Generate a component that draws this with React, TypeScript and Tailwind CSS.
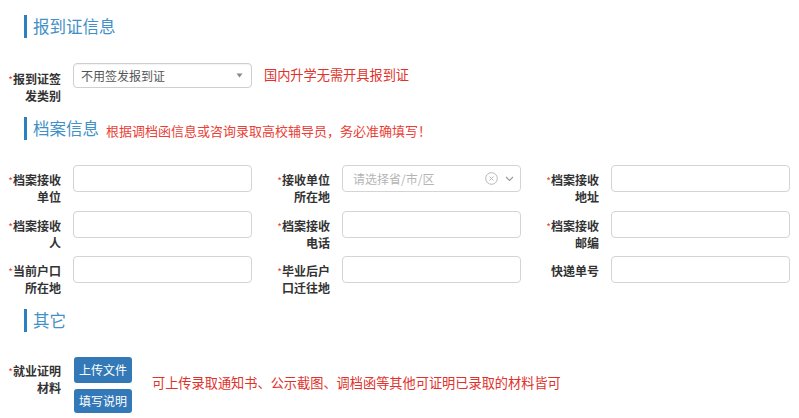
import React from "react";

const Star = () => <span className="text-[#e0453f] text-[10px] font-normal align-top relative top-[1px]">*</span>;

function Label({ lines, req = true, pt = "pt-[6px]" }: { lines: string[]; req?: boolean; pt?: string }) {
  return (
    <div className={`w-[61px] shrink-0 text-right text-[12px] leading-[17px] font-bold text-[#333] ${pt}`}>
      {lines.map((l, i) => (
        <div key={i} className="whitespace-nowrap">
          {i === 0 && req ? <Star /> : null}
          {l}
        </div>
      ))}
    </div>
  );
}

function Heading({ title, children }: { title: string; children?: React.ReactNode }) {
  return (
    <div className="flex items-center pl-[24px]">
      <div className="w-[3px] h-[23px] bg-[#2b80c0]" />
      <div className="ml-[6px] flex items-baseline">
        <span className="text-[16.5px] leading-[23px] text-[#4190c8]">{title}</span>
        {children}
      </div>
    </div>
  );
}

function TextInput() {
  return <div className="w-[179px] h-[27px] shrink-0 border border-[#d4d4d4] rounded-[4px] bg-white" />;
}

function Cell({ lines, req = true, children }: { lines: string[]; req?: boolean; children: React.ReactNode }) {
  return (
    <div className="flex items-start">
      <Label lines={lines} req={req} />
      <div className="ml-[12px]">{children}</div>
    </div>
  );
}

export default function App() {
  return (
    <div className="w-[799px] h-[418px] overflow-hidden bg-white font-['Noto_Sans_CJK_SC','Microsoft_YaHei',sans-serif] pt-[15px]">
      <Heading title="报到证信息" />

      <div className="flex items-start mt-[25px]">
        <Label lines={["报到证签", "发类别"]} pt="pt-[7px]" />
        <div className="ml-[12px] w-[179px] h-[25px] border border-[#cfcfcf] rounded-[4px] flex items-center justify-between pl-[7px] pr-[8px] shadow-[inset_0_1px_1px_rgba(0,0,0,0.05)]">
          <span className="text-[12px] leading-[16px] text-[#555]">不用签发报到证</span>
          <svg width="7" height="5" viewBox="0 0 7 5"><path d="M0.5 0.5 L6.5 0.5 L3.5 4.5 Z" fill="#888" /></svg>
        </div>
        <div className="ml-[12px] mt-[3px] text-[13.2px] leading-[18px] text-[#e0322c]">国内升学无需开具报到证</div>
      </div>

      <div className="mt-[13px]">
        <Heading title="档案信息">
          <span className="ml-[7px] text-[13px] leading-[18px] text-[#ea3e36] relative top-[1px]">根据调档函信息或咨询录取高校辅导员，务必准确填写！</span>
        </Heading>
      </div>

      <div className="mt-[25px] grid grid-cols-[269px_269px_261px] auto-rows-[41px] gap-y-[4.5px]">
        <Cell lines={["档案接收", "单位"]}><TextInput /></Cell>
        <Cell lines={["接收单位", "所在地"]}>
          <div className="w-[179px] h-[27px] border border-[#d4d4d4] rounded-[4px] flex items-center pl-[10px] pr-[6px]">
            <span className="text-[12px] text-[#b5b5b5] leading-[16px] flex-1">请选择省/市/区</span>
            <svg width="13" height="13" viewBox="0 0 13 13" className="mr-[7px]">
              <circle cx="6.5" cy="6.5" r="5.8" fill="none" stroke="#b8b8b8" strokeWidth="1" />
              <path d="M4.5 4.5 L8.5 8.5 M8.5 4.5 L4.5 8.5" stroke="#b8b8b8" strokeWidth="1" />
            </svg>
            <svg width="9" height="6" viewBox="0 0 9 6">
              <path d="M1 1 L4.5 4.5 L8 1" fill="none" stroke="#999" strokeWidth="1.1" />
            </svg>
          </div>
        </Cell>
        <Cell lines={["档案接收", "地址"]}><TextInput /></Cell>

        <Cell lines={["档案接收", "人"]}><TextInput /></Cell>
        <Cell lines={["档案接收", "电话"]}><TextInput /></Cell>
        <Cell lines={["档案接收", "邮编"]}><TextInput /></Cell>

        <Cell lines={["当前户口", "所在地"]}><TextInput /></Cell>
        <Cell lines={["毕业后户", "口迁往地"]}><TextInput /></Cell>
        <Cell lines={["快递单号"]} req={false}><TextInput /></Cell>
      </div>

      <div className="mt-[12px]">
        <Heading title="其它" />
      </div>

      <div className="flex items-start mt-[25px]">
        <Label lines={["就业证明", "材料"]} pt="pt-[5px]" />
        <div className="ml-[13px] flex flex-col gap-[6px]">
          <button className="w-[58px] h-[26px] bg-[#3379b7] rounded-[3px] text-white text-[12px] leading-[16px]">上传文件</button>
          <button className="w-[58px] h-[24px] bg-[#3379b7] rounded-[3px] text-white text-[12px] leading-[16px]">填写说明</button>
        </div>
        <div className="ml-[20px] mt-[17px] text-[13.2px] leading-[18px] text-[#e0322c] whitespace-nowrap">可上传录取通知书、公示截图、调档函等其他可证明已录取的材料皆可</div>
      </div>
    </div>
  );
}
